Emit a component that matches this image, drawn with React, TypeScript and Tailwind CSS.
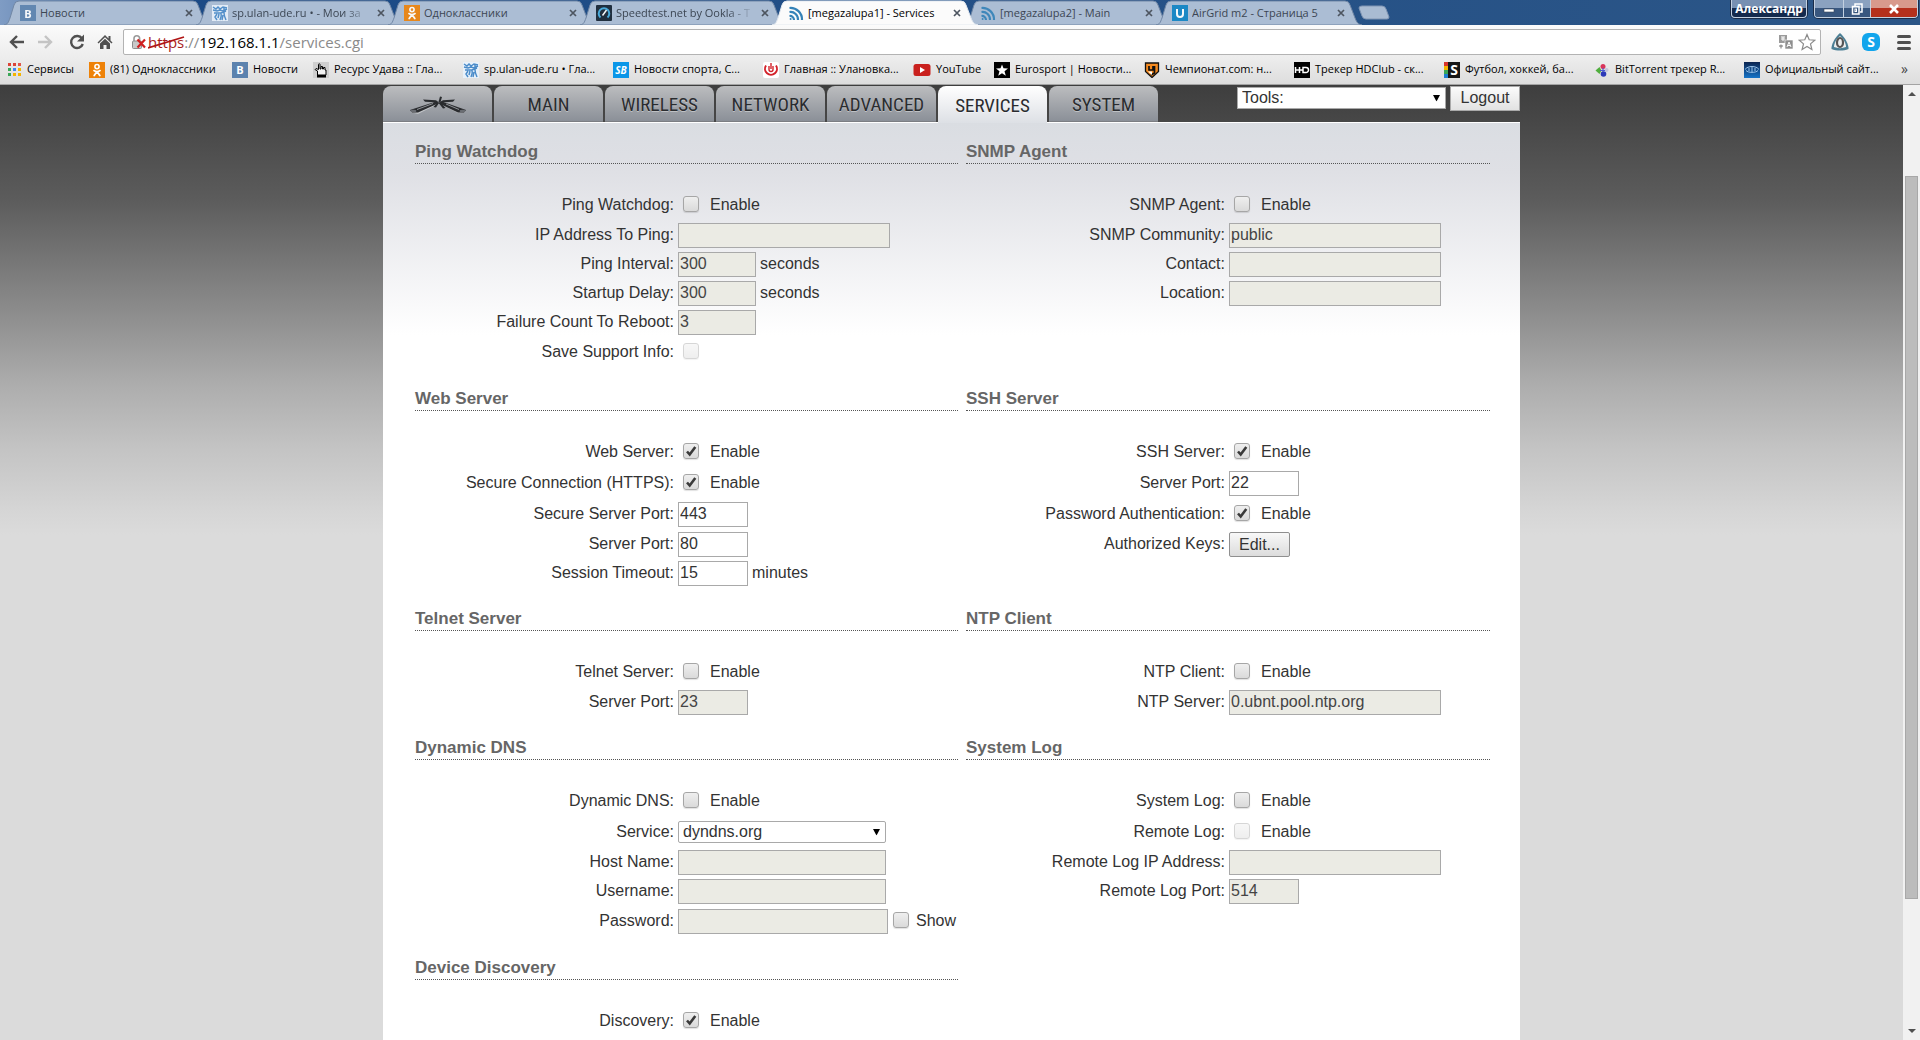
import type { ReactNode } from "react";

/* ---------- small icons ---------- */

function Vk() {
  return (
    <span className="flex size-4 shrink-0 items-center justify-center bg-[#5b82ae] text-[11px] leading-none font-bold text-white">
      В
    </span>
  );
}

function Ulan() {
  return (
    <svg viewBox="0 0 16 16" className="size-4 shrink-0" fill="none" stroke="#4a8bc9" strokeWidth="1.5">
      <rect width="16" height="16" fill="#e8f1fa" stroke="none" />
      <path d="M1 2l3 2 2-2 2 2 3-2 4 1M1 5l4 1 3-1 3 1 4-2M2 8l4 0 3 0 5-2M12 3v5c0 3 1 5 2 7M9 8c1 3 0 5-1 7M5 9l-2 3 2 3M7 9l-1 4M11 10l-1 5" />
    </svg>
  );
}

function Ok() {
  return (
    <svg viewBox="0 0 16 16" className="size-4 shrink-0">
      <rect width="16" height="16" fill="#ee8208" />
      <circle cx="8" cy="4.6" r="2.1" fill="none" stroke="#fff" strokeWidth="1.6" />
      <path d="M5 8.6c2 1.4 4 1.4 6 0M8 9.6l-2.8 4M8 9.6l2.8 4" fill="none" stroke="#fff" strokeWidth="1.8" strokeLinecap="round" />
    </svg>
  );
}

function Speed() {
  return (
    <svg viewBox="0 0 16 16" className="size-4 shrink-0">
      <rect width="16" height="16" rx="1" fill="#12202f" />
      <path d="M4.5 12.5a5.3 5.3 0 1 1 7 0" fill="none" stroke="#3fa9dc" strokeWidth="2" />
      <path d="M6.5 10.5L10.5 5" stroke="#fff" strokeWidth="1.5" />
    </svg>
  );
}

function Waves() {
  return (
    <svg viewBox="0 0 16 16" className="size-4 shrink-0" fill="none" stroke="#3482b8" strokeWidth="2.2">
      <path d="M1.500 3a11.500 11.500 0 0 1 12.500 12M1.500 7a7.500 7.500 0 0 1 8.500 8M1.500 11a4 4 0 0 1 4.500 4" />
      <circle cx="2.600" cy="14" r="1" fill="#3482b8" stroke="none" />
    </svg>
  );
}

function Ubnt() {
  return (
    <svg viewBox="0 0 16 16" className="size-4 shrink-0">
      <rect width="16" height="16" fill="#0d83c4" />
      <path d="M5 4v5a3 3 0 0 0 6 0V4" fill="none" stroke="#fff" strokeWidth="2" />
    </svg>
  );
}

function Apps() {
  const colors = ["#dc4437", "#dc4437", "#e2574a", "#3aa757", "#4285f4", "#f4b400", "#3aa757", "#f4b400", "#f4b400"];
  return (
    <svg viewBox="0 0 14 14" className="size-3.5 shrink-0">
      {colors.map((c, i) => (
        <rect key={i} x={(i % 3) * 5} y={Math.floor(i / 3) * 5} width="3" height="3" fill={c} />
      ))}
    </svg>
  );
}

function Hand() {
  return (
    <svg viewBox="0 0 16 16" className="size-4 shrink-0">
      <rect width="16" height="16" fill="#cfcfcf" />
      <path d="M4.500 13V9L2 7.500l1-1 2.500 1V2.500c0-1 1.500-1 1.500 0V7h1V4.500h1.500V7h1V5.500H12V8h1v5z" fill="#f2f2f2" stroke="#000" />
      <rect x="4" y="13" width="9" height="2.500" fill="#000" />
    </svg>
  );
}

function Sb() {
  return (
    <span className="flex size-4 shrink-0 items-center justify-center bg-[#0a96e8] text-[10px] leading-none font-bold text-white italic">
      SB
    </span>
  );
}

function Ulanovka() {
  return (
    <svg viewBox="0 0 16 16" className="size-4 shrink-0">
      <rect width="16" height="16" rx="2" fill="#fff" />
      <path d="M3 3.500a6 6 0 1 0 10 0" fill="none" stroke="#d3222a" strokeWidth="2" />
      <path d="M6 4v3.500a2 2 0 0 0 4 0V4M8 1v6" fill="none" stroke="#d3222a" strokeWidth="1.400" />
    </svg>
  );
}

function Youtube() {
  return (
    <svg viewBox="0 0 18 16" className="h-4 w-[18px] shrink-0">
      <rect x="0.500" y="2" width="17" height="12" rx="2.500" fill="#c9201d" />
      <path d="M7 5l5 3-5 3z" fill="#fff" />
    </svg>
  );
}

function Eurosport() {
  return (
    <svg viewBox="0 0 16 16" className="size-4 shrink-0">
      <rect width="16" height="16" fill="#000" />
      <path d="M8 2.500l1.500 3.700 4.500.3-3.500 2.800 1.300 4.400L8 11.200l-3.800 2.500 1.300-4.400L2 6.500l4.500-.3z" fill="#fff" />
    </svg>
  );
}

function Champ() {
  return (
    <svg viewBox="0 0 16 16" className="size-4 shrink-0">
      <path d="M1.500 1h13v8.500L8 15.500 1.500 9.500z" fill="#f58a1f" stroke="#111" strokeWidth="1.300" />
      <path d="M5 4v4h4V4M10.500 4v7L7 13" fill="none" stroke="#111" strokeWidth="1.700" />
      <path d="M4 9.500h4V13z" fill="#fff" />
    </svg>
  );
}

function Hd() {
  return (
    <svg viewBox="0 0 16 16" className="size-4 shrink-0">
      <rect width="16" height="16" fill="#000" />
      <path d="M1.500 5v6M1.500 8H9M5.500 5v6M9 5.500h3a2.500 2.500 0 0 1 0 5H9z" fill="none" stroke="#fff" strokeWidth="1.500" />
    </svg>
  );
}

function Sports() {
  return (
    <span className="flex size-4 shrink-0 bg-[#161616] text-[14px] leading-4 font-bold text-white">
      <span className="flex w-1 flex-col">
        <span className="h-1 bg-[#d8342b]" />
        <span className="h-1 bg-[#f4b400]" />
        <span className="h-1 bg-[#3aa757]" />
        <span className="h-1 bg-[#1f7fd0]" />
      </span>
      <span className="flex-1 text-center">S</span>
    </span>
  );
}

function Torrent() {
  return (
    <svg viewBox="0 0 16 16" className="size-4 shrink-0">
      <circle cx="9" cy="4.500" r="2.500" fill="#d8345a" />
      <path d="M1.500 8.500L5.500 5l2 3.500-2 3.500z" fill="#4fae3c" />
      <circle cx="12.500" cy="8" r="2" fill="#c3c5dc" />
      <circle cx="9.500" cy="12" r="2.800" fill="#2c39b8" />
      <path d="M9 6v4M6 8.500h5" stroke="#4a5ad0" strokeWidth="1.200" />
    </svg>
  );
}

function Uefa() {
  return (
    <svg viewBox="0 0 16 16" className="size-4 shrink-0">
      <defs>
        <linearGradient id="uefa" x1="0" y1="0" x2="0" y2="1">
          <stop offset="0" stopColor="#0b2450" />
          <stop offset="1" stopColor="#1674c8" />
        </linearGradient>
      </defs>
      <rect width="16" height="16" fill="url(#uefa)" />
      <path d="M1 7.500c3-4 11-4 14 0M2 8.500c2 2.500 10 2.500 12 0M5 6v3M8 5v5M11 6v3" fill="none" stroke="#9cc4ea" />
    </svg>
  );
}

/* ---------- browser chrome ---------- */

type Tab = { icon: ReactNode; title: string; active?: boolean; fade?: boolean };

const tabs: Tab[] = [
  { icon: <Vk />, title: "Новости" },
  { icon: <Ulan />, title: "sp.ulan-ude.ru • - Мои за", fade: true },
  { icon: <Ok />, title: "Одноклассники" },
  { icon: <Speed />, title: "Speedtest.net by Ookla - Т", fade: true },
  { icon: <Waves />, title: "[megazalupa1] - Services", active: true },
  { icon: <Waves />, title: "[megazalupa2] - Main" },
  { icon: <Ubnt />, title: "AirGrid m2 - Страница 5" },
];

function BrowserTab({ icon, title, active, fade }: Tab) {
  return (
    <div className={`relative -mr-[14px] flex h-[25px] w-[206px] items-center pt-px pr-[15px] pl-4 ${active ? "z-10 text-black" : "text-[#3c4653]"}`}>
      <svg viewBox="0 0 206 25" preserveAspectRatio="none" className="absolute inset-0 h-full w-full">
        <path
          d="M0 25C4 24 4 23 6 18L10 5Q11 1 15 1H189Q193 1 194 5L199 18C201 23 202 24 206 25Z"
          fill={active ? "#fbfbfb" : "#abbdd4"}
          stroke={active ? "#e2e8ef" : "#7187a5"}
        />
      </svg>
      <span className={`relative ${active ? "" : "opacity-90"}`}>{icon}</span>
      <span
        className={`relative ml-1 min-w-0 flex-1 overflow-hidden whitespace-nowrap ${fade ? "[mask-image:linear-gradient(to_right,black_80%,transparent)]" : ""}`}
      >
        {title}
      </span>
      <button aria-label="Закрыть вкладку" className="relative ml-1 flex size-3 items-center justify-center">
        <svg viewBox="0 0 8 8" className="size-2" stroke="#4d5560" strokeWidth="1.700">
          <path d="M1 1l6 6M7 1L1 7" />
        </svg>
      </button>
    </div>
  );
}

function TabStrip() {
  return (
    <div className="flex h-[25px] shrink-0 items-start justify-between bg-linear-to-r from-[#7f9cc4] via-[#1b4a86] via-10% to-[#2c5687]">
      <div className="flex pl-1">
        {tabs.map((t) => (
          <BrowserTab key={t.title} {...t} />
        ))}
        <button aria-label="Новая вкладка" className="mt-[5px] ml-[10px] self-start">
          <svg viewBox="0 0 32 15" className="block h-[15px] w-8">
            <path d="M4 1H24Q27 1 28 4L31 12Q31 14 29 14H8Q5 14 4 11L1 3Q1 1 4 1Z" fill="#a9bbd2" stroke="#8095b3" />
          </svg>
        </button>
      </div>
      <div className="flex pr-[2px] text-white">
        <button className="mr-[7px] h-[18px] w-[76px] rounded-b border border-t-0 border-[#c3d0e0] bg-linear-to-b from-[#7790b2] from-45% to-[#142a4d] to-50% text-[12px] leading-4 font-bold shadow-[0_0_0_1px_#1b2d49]">
          Александр
        </button>
        <div className="flex h-[18px] overflow-hidden rounded-b border border-t-0 border-[#c3d0e0] shadow-[0_0_0_1px_#1b2d49]">
          <button aria-label="Свернуть" className="flex w-7 items-center justify-center bg-linear-to-b from-[#8ba2c0] from-45% to-[#39577f] to-50%">
            <svg viewBox="0 0 12 10" className="h-2.5 w-3"><rect x="1" y="5" width="10" height="3" fill="#fff" stroke="#39475c" strokeWidth=".6" /></svg>
          </button>
          <button aria-label="Восстановить" className="flex w-7 items-center justify-center border-x border-[#c3d0e0] bg-linear-to-b from-[#8ba2c0] from-45% to-[#39577f] to-50%">
            <svg viewBox="0 0 12 12" className="size-3" fill="none" stroke="#fff" strokeWidth="1.500">
              <path d="M4 3V1h7v8H9" />
              <rect x="1.500" y="3.500" width="6.500" height="7.500" />
              <rect x="4" y="6" width="1.500" height="2.500" strokeWidth="1" />
            </svg>
          </button>
          <button aria-label="Закрыть" className="flex w-[46px] items-center justify-center bg-linear-to-b from-[#d89a8c] from-45% to-[#b5301c] to-50%">
            <svg viewBox="0 0 12 10" className="h-2.5 w-3" stroke="#fff" strokeWidth="2.600"><path d="M2 1l8 8M10 1L2 9" /></svg>
          </button>
        </div>
      </div>
    </div>
  );
}

function Toolbar() {
  return (
    <div className="flex h-[34px] shrink-0 items-start bg-linear-to-b from-[#fbfbfb] to-[#ececec] pt-1">
      <div className="flex h-[26px] w-[123px] shrink-0 items-center gap-3 pl-[9px]">
        <button aria-label="Назад">
          <svg viewBox="0 0 16 16" className="size-4" fill="none" stroke="#505050" strokeWidth="2.400"><path d="M15 8H2.500M8 2L2 8l6 6" /></svg>
        </button>
        <button aria-label="Вперёд">
          <svg viewBox="0 0 16 16" className="size-4" fill="none" stroke="#c4c4c4" strokeWidth="2.400"><path d="M1 8h12.500M8 2l6 6-6 6" /></svg>
        </button>
        <button aria-label="Обновить" className="ml-1">
          <svg viewBox="0 0 16 16" className="size-4">
            <path d="M13 4.500A6 6 0 1 0 13.800 10" fill="none" stroke="#505050" strokeWidth="2.400" />
            <path d="M15 0.500v7H8z" fill="#505050" />
          </svg>
        </button>
        <button aria-label="Домой">
          <svg viewBox="0 0 16 16" className="size-4">
            <path d="M8 1L0.500 8.500l1 1L8 3.200l6.500 6.300 1-1L13.500 6.500V2h-2v2.500z" fill="#505050" />
            <path d="M3 9.500L8 4.800l5 4.700V15H9.500v-4h-3v4H3z" fill="#505050" />
          </svg>
        </button>
      </div>
      <div className="flex h-[26px] min-w-0 flex-1 items-center rounded-xs border border-[#b3b3b3] bg-white pr-1 pl-[7px] font-['Open_Sans',sans-serif] text-[15px]">
        <svg viewBox="0 0 16 16" className="size-4 shrink-0">
          <path d="M3 8V4.500a2.800 2.800 0 0 1 5.600 0V8" fill="none" stroke="#9a9a9a" strokeWidth="1.600" />
          <rect x="1.500" y="7" width="9" height="7.500" rx="1" fill="#c9c9c9" stroke="#8d8d8d" />
          <path d="M6.500 5.500l7.500 8M14 5.500l-7.500 8" stroke="#d01f1f" strokeWidth="2.200" />
        </svg>
        <div className="relative ml-px text-[#8a8a8a]">
          <span className="text-[#a81d1d]">https</span>://<span className="text-black">192.168.1.1</span>/services.cgi
          <svg viewBox="0 0 38 16" className="absolute top-1 left-0 h-4 w-[38px]" stroke="#b01515" strokeWidth="1.800"><path d="M0 13L36 2" /></svg>
        </div>
        <div className="ml-auto flex items-center gap-1">
          <svg viewBox="0 0 16 16" className="size-4">
            <path d="M1 1h8v8H1z" fill="#9b9b9b" />
            <path d="M3 3h4M3 5h4M5 3v4" stroke="#fff" />
            <path d="M7 6h8v9H7z" fill="#8f8f8f" stroke="#fff" strokeWidth=".6" />
            <path d="M9 13l2-5 2 5M9.800 11.500h2.400" fill="none" stroke="#fff" />
            <path d="M1 12h4M3 10.500v4" stroke="#777" />
          </svg>
          <svg viewBox="0 0 18 18" className="size-[18px]">
            <path d="M9 1.500l2.200 5.300 5.600.4-4.300 3.700 1.400 5.600L9 13.500l-4.900 3 1.400-5.600L1.200 7.200l5.600-.4z" fill="#fff" stroke="#8b8b8b" strokeWidth="1.200" />
          </svg>
        </div>
      </div>
      <div className="flex h-[26px] shrink-0 items-center pr-[9px] pl-[9px]">
        <svg viewBox="0 0 20 20" className="size-5">
          <path d="M10 1C15 5 19 13 18.500 17c-5 2-12 2-17 0C1 13 5 5 10 1z" fill="#4c7f95" />
          <path d="M10 4c3 2 6 7 6 11-4 1.500-8 1.500-12 0 0-4 3-9 6-11z" fill="#f0f0f0" />
          <ellipse cx="10" cy="10.500" rx="3" ry="4.500" fill="none" stroke="#555" strokeWidth="2.200" />
        </svg>
        <span className="ml-3 flex size-[18px] items-center justify-center rounded-md bg-[#12a5ec] text-[14px] leading-none font-bold text-white">S</span>
        <button aria-label="Меню" className="ml-[17px] flex w-[14px] flex-col gap-[3px]">
          <span className="h-[3px] rounded-xs bg-[#505050]" />
          <span className="h-[3px] rounded-xs bg-[#505050]" />
          <span className="h-[3px] rounded-xs bg-[#505050]" />
        </button>
      </div>
    </div>
  );
}

const bookmarks = [
  { icon: <Apps />, title: "Сервисы", width: "w-[81px]" },
  { icon: <Ok />, title: "(81) Одноклассники", width: "w-[143px]" },
  { icon: <Vk />, title: "Новости", width: "w-[81px]" },
  { icon: <Hand />, title: "Ресурс Удава :: Гла...", width: "w-[150px]" },
  { icon: <Ulan />, title: "sp.ulan-ude.ru • Гла...", width: "w-[150px]" },
  { icon: <Sb />, title: "Новости спорта, С...", width: "w-[150px]" },
  { icon: <Ulanovka />, title: "Главная :: Улановка...", width: "w-[150px]" },
  { icon: <Youtube />, title: "YouTube", width: "w-[81px]" },
  { icon: <Eurosport />, title: "Eurosport | Новости...", width: "w-[150px]" },
  { icon: <Champ />, title: "Чемпионат.com: н...", width: "w-[150px]" },
  { icon: <Hd />, title: "Трекер HDClub - ск...", width: "w-[150px]" },
  { icon: <Sports />, title: "Футбол, хоккей, ба...", width: "w-[150px]" },
  { icon: <Torrent />, title: "BitTorrent трекер R...", width: "w-[150px]" },
  { icon: <Uefa />, title: "Официальный сайт...", width: "w-[150px]" },
];

function BookmarkBar() {
  return (
    <nav className="flex h-[26px] shrink-0 items-center overflow-hidden border-b border-[#a3a3a3] bg-linear-to-b from-[#ececec] to-[#dddddd] pb-1 pl-2">
      {bookmarks.map((b) => (
        <a key={b.title} href="#bookmark" className={`flex shrink-0 items-center gap-[5px] whitespace-nowrap text-black ${b.width}`}>
          {b.icon}
          {b.title}
        </a>
      ))}
      <button aria-label="Другие закладки" className="ml-auto pr-3 pb-[2px] text-[14px] leading-none text-[#444]">»</button>
    </nav>
  );
}

function ScrollBar() {
  return (
    <div aria-hidden="true" className="flex w-[17px] shrink-0 flex-col items-center bg-[#f1f1f1] py-[7px]">
      <svg viewBox="0 0 8 4" className="h-1 w-2"><path d="M0 4l4-4 4 4z" fill="#505050" /></svg>
      <div className="flex w-full flex-1 flex-col px-[2px] pt-20 pb-[130px]">
        <div className="flex-1 border border-[#a8a8a8] bg-[#bcbcbc]" />
      </div>
      <svg viewBox="0 0 8 4" className="h-1 w-2"><path d="M0 0l4 4 4-4z" fill="#505050" /></svg>
    </div>
  );
}

/* ---------- settings form ---------- */

type Field = {
  label: string;
  tall?: boolean;
  kind: "check" | "text" | "password" | "select" | "button";
  value?: string;
  checked?: boolean;
  disabled?: boolean;
  width?: string;
  after?: string;
};

type Group = { title: string; fields: Field[] };

const wide = "w-[212px]";
const host = "w-[208px]";
const port = "w-[70px]";
const num = "w-[78px]";

const groups: Group[] = [
  {
    title: "Ping Watchdog",
    fields: [
      { label: "Ping Watchdog:", kind: "check", after: "Enable", tall: true },
      { label: "IP Address To Ping:", kind: "text", disabled: true, width: wide },
      { label: "Ping Interval:", kind: "text", value: "300", disabled: true, width: num, after: "seconds" },
      { label: "Startup Delay:", kind: "text", value: "300", disabled: true, width: num, after: "seconds" },
      { label: "Failure Count To Reboot:", kind: "text", value: "3", disabled: true, width: num },
      { label: "Save Support Info:", kind: "check", disabled: true, tall: true },
    ],
  },
  {
    title: "SNMP Agent",
    fields: [
      { label: "SNMP Agent:", kind: "check", after: "Enable", tall: true },
      { label: "SNMP Community:", kind: "text", value: "public", disabled: true, width: wide },
      { label: "Contact:", kind: "text", disabled: true, width: wide },
      { label: "Location:", kind: "text", disabled: true, width: wide },
    ],
  },
  {
    title: "Web Server",
    fields: [
      { label: "Web Server:", kind: "check", checked: true, after: "Enable", tall: true },
      { label: "Secure Connection (HTTPS):", kind: "check", checked: true, after: "Enable", tall: true },
      { label: "Secure Server Port:", kind: "text", value: "443", width: port, tall: true },
      { label: "Server Port:", kind: "text", value: "80", width: port },
      { label: "Session Timeout:", kind: "text", value: "15", width: port, after: "minutes" },
    ],
  },
  {
    title: "SSH Server",
    fields: [
      { label: "SSH Server:", kind: "check", checked: true, after: "Enable", tall: true },
      { label: "Server Port:", kind: "text", value: "22", width: port, tall: true },
      { label: "Password Authentication:", kind: "check", checked: true, after: "Enable", tall: true },
      { label: "Authorized Keys:", kind: "button", value: "Edit..." },
    ],
  },
  {
    title: "Telnet Server",
    fields: [
      { label: "Telnet Server:", kind: "check", after: "Enable", tall: true },
      { label: "Server Port:", kind: "text", value: "23", disabled: true, width: port },
    ],
  },
  {
    title: "NTP Client",
    fields: [
      { label: "NTP Client:", kind: "check", after: "Enable", tall: true },
      { label: "NTP Server:", kind: "text", value: "0.ubnt.pool.ntp.org", disabled: true, width: wide },
    ],
  },
  {
    title: "Dynamic DNS",
    fields: [
      { label: "Dynamic DNS:", kind: "check", after: "Enable", tall: true },
      { label: "Service:", kind: "select", value: "dyndns.org", width: host, tall: true },
      { label: "Host Name:", kind: "text", disabled: true, width: host },
      { label: "Username:", kind: "text", disabled: true, width: host },
      { label: "Password:", kind: "password", disabled: true, width: "w-[210px]", tall: true },
    ],
  },
  {
    title: "System Log",
    fields: [
      { label: "System Log:", kind: "check", after: "Enable", tall: true },
      { label: "Remote Log:", kind: "check", disabled: true, after: "Enable", tall: true },
      { label: "Remote Log IP Address:", kind: "text", disabled: true, width: wide },
      { label: "Remote Log Port:", kind: "text", value: "514", disabled: true, width: port },
    ],
  },
  {
    title: "Device Discovery",
    fields: [{ label: "Discovery:", kind: "check", checked: true, after: "Enable", tall: true }],
  },
];

function CheckBox({ id, checked, disabled }: { id: string; checked?: boolean; disabled?: boolean }) {
  return (
    <span className="mb-[3px] ml-[5px] grid size-4 shrink-0">
      <input
        id={id}
        type="checkbox"
        defaultChecked={checked}
        disabled={disabled}
        className="peer col-start-1 row-start-1 size-4 appearance-none rounded-[3px] border border-[#a6a6a6] bg-linear-to-b from-[#efefef] to-[#dadada] shadow-[0_1px_1px_#0000001f] disabled:opacity-45"
      />
      <svg viewBox="0 0 16 16" className="pointer-events-none invisible col-start-1 row-start-1 size-4 peer-checked:visible">
        <path d="M4 8.500l2.700 3L12.300 4" fill="none" stroke="#3a3a3a" strokeWidth="2.600" />
      </svg>
    </span>
  );
}

function Arrow() {
  return (
    <svg viewBox="0 0 7 7" className="pointer-events-none absolute top-1/2 right-[6px] size-[7px] -translate-y-1/2">
      <path d="M0 0.500h7L3.500 7z" fill="#000" />
    </svg>
  );
}

function Row({ id, field }: { id: string; field: Field }) {
  const { label, kind, value, checked, disabled, width, after, tall } = field;
  return (
    <div className={`flex items-center pb-[2px] ${tall ? "h-[31px]" : "h-[29px]"}`}>
      <label htmlFor={id} className="w-[263px] shrink-0 pr-1 pb-[2px] text-right">
        {label}
      </label>
      {kind === "check" && (
        <>
          <CheckBox id={id} checked={checked} disabled={disabled} />
          {after && <label htmlFor={id} className="ml-[11px] pb-[2px]">{after}</label>}
        </>
      )}
      {(kind === "text" || kind === "password") && (
        <>
          <input
            id={id}
            type={kind}
            defaultValue={value}
            disabled={disabled}
            className={`h-[25px] border border-[#a9a9a9] bg-white px-px pb-[2px] text-[#333] disabled:bg-[#ebebe4] disabled:text-[#444] ${width}`}
          />
          {after && <span className="ml-1 pb-[2px]">{after}</span>}
        </>
      )}
      {kind === "password" && (
        <>
          <CheckBox id={`${id}-show`} />
          <label htmlFor={`${id}-show`} className="ml-[7px] pb-[2px]">Show</label>
        </>
      )}
      {kind === "select" && (
        <span className={`relative mb-[2px] ${width}`}>
          <select id={id} className="block h-[22px] w-full appearance-none rounded-xs border border-[#a9a9a9] bg-white px-1 leading-5">
            <option>{value}</option>
          </select>
          <Arrow />
        </span>
      )}
      {kind === "button" && (
        <button id={id} className="h-[25px] w-[61px] rounded-xs border border-[#8f8f8f] bg-linear-to-b from-[#f8f8f8] to-[#dcdcdc] pb-[3px]">
          {value}
        </button>
      )}
    </div>
  );
}

function Section({ title, fields }: Group) {
  return (
    <section>
      <h2 className="mb-[27px] h-[41px] border-b border-dotted border-[#555] pt-[19px] text-[17px] leading-5 font-bold text-[#666]">{title}</h2>
      {fields.map((f, i) => (
        <Row key={f.label} id={`${title.replace(/ /g, "-").toLowerCase()}-${i}`} field={f} />
      ))}
    </section>
  );
}

function Logo() {
  return (
    <svg viewBox="0 0 58 20" className="h-5 w-[58px]">
      <path d="M1 17l8 2 20-10-4-2zM57 17l-8 1L31 9l4-2z" fill="#f4f4f4" opacity=".45" />
      <g fill="#2a2c2f">
        <path d="M1 15L27 6.500l3 1.500L9 17.500 3 17.500z" />
        <path d="M57 15L33 6.500 29 8l20 9.500h6z" />
        <path d="M14 4.500l13 .8 3 2.200-14-.8z" />
        <path d="M46 4.500l-12 .8-4 2.200 14-.8z" />
        <path d="M31 1.500l2 .5-1.500 5H29.500z" />
        <path d="M28.500 7l1.500 1-3 4.500-2.500-.5zM31 7l-1 1.500 4 5 2.500-.5z" />
      </g>
      <path d="M8 14.500L24 8.500M50 14.500L37 9" stroke="#8e9196" />
      <ellipse cx="4.500" cy="16" rx="3" ry="1.300" fill="#6a6d72" />
      <ellipse cx="53.500" cy="16" rx="3" ry="1.300" fill="#6a6d72" />
    </svg>
  );
}

const pages = ["MAIN", "WIRELESS", "NETWORK", "ADVANCED", "SERVICES", "SYSTEM"];

const tabBase = "flex h-9 flex-1 items-center justify-center rounded-t-lg pt-[2px]";
const tabIdle = "border-b border-[#7c7e83] bg-linear-to-b from-[#bcbdbf] to-[#8b9098]";
const tabActive = "relative -mb-px h-[37px] bg-linear-to-b from-white to-[#dde0e5]";

export default function App() {
  return (
    <div className="flex h-screen min-w-[1280px] flex-col overflow-hidden font-['Liberation_Sans',Arial,sans-serif] text-[#333]">
      <header className="shrink-0 font-['Open_Sans',sans-serif] text-[11px]">
        <TabStrip />
        <Toolbar />
        <BookmarkBar />
      </header>
      <div className="flex min-h-0 flex-1">
        <main className="min-w-0 flex-1 overflow-hidden bg-[#dbdbdb] bg-[linear-gradient(to_bottom,#3e3e3e_0px,#484848_40px,#5c5c5c_115px,#787878_180px,#929292_240px,#adadad_300px,#c3c3c3_362px,#d5d5d5_424px,#dbdbdb_450px)] text-[16px] leading-6">
          <div className="mx-auto max-w-[1137px]">
            <div className="flex items-start justify-between pt-px">
              <nav className="flex w-[775px] gap-[2px] text-[19px] text-[#2a2c2f] [text-shadow:0_1px_0_#ffffff66]">
                <a href="#ubnt" aria-label="Ubiquiti" className={`${tabBase} ${tabIdle}`}>
                  <Logo />
                </a>
                {pages.map((p) => (
                  <a
                    key={p}
                    href={`#${p.toLowerCase()}`}
                    className={`${tabBase} font-['Roboto_Condensed','Open_Sans_Condensed',sans-serif] ${p === "SERVICES" ? tabActive : tabIdle}`}
                  >
                    {p}
                  </a>
                ))}
              </nav>
              <div className="flex items-start gap-1">
                <span className="relative w-[209px] pt-px">
                  <select aria-label="Tools" className="block h-[22px] w-full appearance-none border border-[#a9a9a9] bg-white px-1 leading-5">
                    <option>Tools:</option>
                  </select>
                  <Arrow />
                </span>
                <button className="h-[25px] w-[70px] border border-[#a9a9a9] bg-linear-to-b from-[#fbfbfb] to-[#e2e2e2] pb-[2px] leading-5">Logout</button>
              </div>
            </div>
            <form className="grid grid-cols-[543fr_524fr] gap-x-2 gap-y-px border-t border-white bg-white bg-[linear-gradient(to_bottom,#dadde2_0px,#dfe0e5_50px,#ffffff_212px)] pr-[30px] pb-10 pl-8">
              {groups.map((g) => (
                <Section key={g.title} {...g} />
              ))}
            </form>
          </div>
        </main>
        <ScrollBar />
      </div>
    </div>
  );
}
